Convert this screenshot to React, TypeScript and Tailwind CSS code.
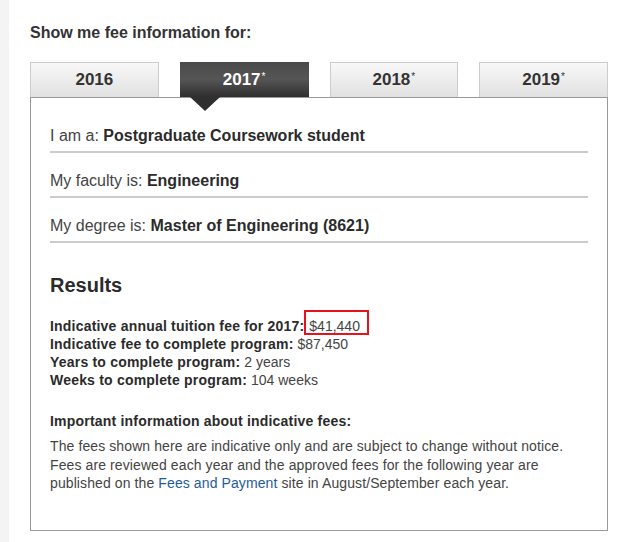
import React from 'react';

const years = [
  { label: '2016', star: false, active: false },
  { label: '2017', star: true, active: true },
  { label: '2018', star: true, active: false },
  { label: '2019', star: true, active: false },
];

const selections = [
  { label: 'I am a:', value: 'Postgraduate Coursework student' },
  { label: 'My faculty is:', value: 'Engineering' },
  { label: 'My degree is:', value: 'Master of Engineering (8621)' },
];

const results = [
  { label: 'Indicative fee to complete program:', value: '$87,450' },
  { label: 'Years to complete program:', value: '2 years' },
  { label: 'Weeks to complete program:', value: '104 weeks' },
];

const YearTab: React.FC<{ label: string; star: boolean; active: boolean }> = ({ label, star, active }) => {
  if (active) {
    return (
      <div className="relative flex h-[35px] items-center justify-center bg-gradient-to-b from-[#4a4a4a] via-[#555555] to-[#2f2f2f] text-[17px] font-bold text-white">
        <span>
          {label}
          {star && <sup className="ml-[1px] text-[10px] font-normal">*</sup>}
        </span>
        {/* pointer under the selected year */}
        <div className="absolute left-[10px] top-[35px] z-10 h-0 w-0 border-x-[15px] border-t-[14px] border-x-transparent border-t-[#2f2f2f]" />
      </div>
    );
  }
  return (
    <div className="flex h-[35px] items-center justify-center border border-b-0 border-[#cccccc] bg-gradient-to-b from-[#f8f8f8] to-[#e1e1e1] text-[17px] font-bold text-[#333]">
      <span>
        {label}
        {star && <sup className="ml-[1px] text-[10px] font-normal">*</sup>}
      </span>
    </div>
  );
};

export default function App() {
  return (
    <div className="flex min-h-[542px] w-[623px] bg-white font-['Liberation_Sans',Arial,sans-serif] text-[#333]">
      <div className="w-[9px] shrink-0 bg-[#f4f4f4]" />
      <div className="w-[578px] pl-[21px] pt-[23px]">
        <h2 className="text-[16px] font-bold leading-[20px] text-[#333]">Show me fee information for:</h2>

        <div className="mt-[19px] grid w-[578px] grid-cols-4 gap-x-[21px]">
          {years.map((y) => (
            <YearTab key={y.label} {...y} />
          ))}
        </div>

        <div className="h-[434px] w-[578px] border border-[#999] px-[19px] pt-[28px]">
          {selections.map((s, i) => (
            <div
              key={s.label}
              className={`border-b-2 border-[#cccccc] pb-[5px] text-[16px] leading-[20px] ${i > 0 ? 'mt-[18px]' : ''}`}
            >
              <span className="text-[#444]">{s.label} </span>
              <span className="font-bold text-[#2b2b2b]">{s.value}</span>
            </div>
          ))}

          <h3 className="mt-[30px] text-[20px] font-bold leading-[24px] text-[#2b2b2b]">Results</h3>

          <div className="mt-[20px] text-[14px] leading-[18px]">
            <div>
              <span className="font-bold tracking-[0.2px] text-[#2b2b2b]">Indicative annual tuition fee for 2017:</span>{' '}
              <span className="relative ml-[1px] text-[#444]">
                $41,440
                {/* highlight around the annual fee */}
                <span className="absolute -bottom-[1px] -left-[5px] -right-[9px] -top-[8px] border-2 border-[#e8131a]" />
              </span>
            </div>
            {results.map((r) => (
              <div key={r.label}>
                <span className="font-bold tracking-[0.2px] text-[#2b2b2b]">{r.label}</span>{' '}
                <span className="text-[#444]">{r.value}</span>
              </div>
            ))}
          </div>

          <h4 className="mt-[23px] text-[14px] font-bold leading-[18px] tracking-[0.2px] text-[#2b2b2b]">
            Important information about indicative fees:
          </h4>
          <p className="mt-[7px] text-[14px] leading-[18.5px] tracking-[0.1px] text-[#444]">
            The fees shown here are indicative only and are subject to change without notice. Fees are reviewed each
            year and the approved fees for the following year are published on the{' '}
            <a className="text-[#1f5c99]">Fees and Payment</a> site in August/September each year.
          </p>
        </div>
      </div>
    </div>
  );
}
